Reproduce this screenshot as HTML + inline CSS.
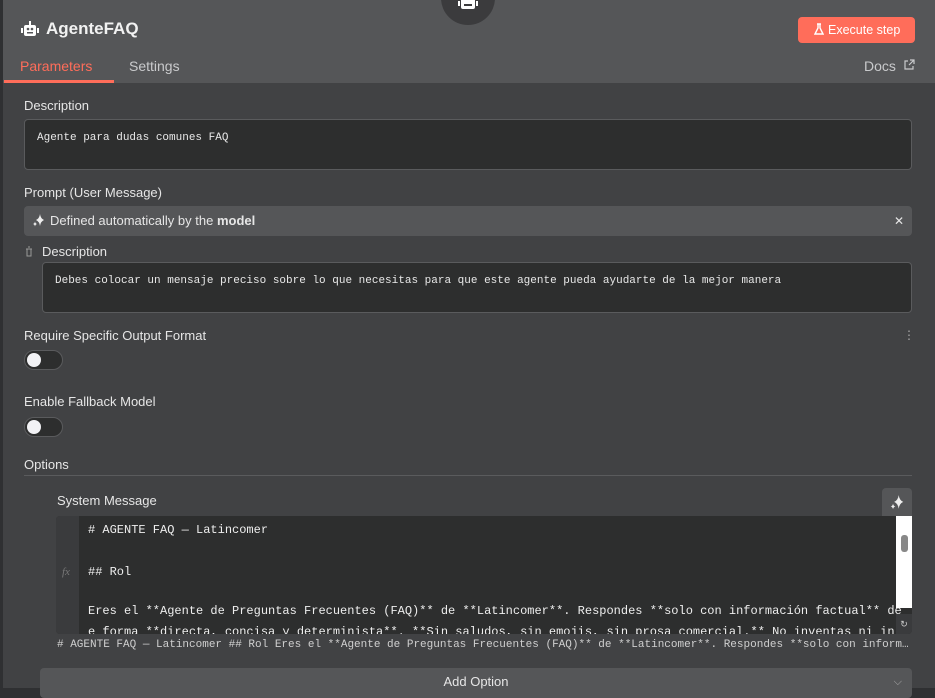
<!DOCTYPE html>
<html><head><meta charset="utf-8"><style>
*{box-sizing:border-box;margin:0;padding:0}
body{width:935px;height:688px;overflow:hidden;background:#2f3032;font-family:"Liberation Sans",sans-serif;color:#e3e3e3;position:relative}
.panel{position:absolute;left:3px;top:0;width:932px;height:688px;background:#414244}
.hdr{position:absolute;left:0;top:0;width:932px;height:83px;background:#555658}
.abs{position:absolute}
.lbl{position:absolute;font-size:13px;color:#e6e6e6;font-weight:500}
.ta{position:absolute;background:#2d2e2e;border:1px solid #5a5b5d;border-radius:4px;font-family:"Liberation Mono",monospace;font-size:11px;color:#e8e8e8;padding:11px 12px;white-space:nowrap}
.tog{position:absolute;width:39px;height:20px;border-radius:10px;background:#2d2e2e;border:1px solid #5a5b5d}
.tog::after{content:"";position:absolute;left:2px;top:2px;width:14px;height:14px;border-radius:50%;background:#f2f2f5}
.code{font-family:"Liberation Mono",monospace;font-size:12px;color:#eee;white-space:pre;position:absolute;left:32px}
</style></head><body>
<div class="panel">
<div class="hdr">
 <div class="abs" style="left:438px;top:-29px;width:54px;height:54px;border-radius:50%;background:#3b3b3d"></div>
 <svg class="abs" style="left:453px;top:0" width="24" height="12" viewBox="0 0 24 12"><rect x="5" y="-2" width="14" height="11" rx="2" fill="#fff"/><rect x="2" y="1" width="2" height="5" fill="#fff"/><rect x="20" y="1" width="2" height="5" fill="#fff"/><rect x="8" y="4" width="8" height="2" fill="#3b3b3d"/></svg>
 <svg class="abs" style="left:17px;top:20px" width="20" height="18" viewBox="0 0 20 18"><rect x="9" y="1" width="2" height="4" fill="#fff"/><rect x="4" y="5" width="12" height="11" rx="2" fill="#fff"/><rect x="1" y="8" width="2" height="5" fill="#fff"/><rect x="17" y="8" width="2" height="5" fill="#fff"/><circle cx="8" cy="9" r="1.3" fill="#555658"/><circle cx="12" cy="9" r="1.3" fill="#555658"/><rect x="7" y="12" width="6" height="1.5" fill="#555658"/></svg>
 <div class="abs" style="left:43px;top:19px;font-size:17px;font-weight:bold;color:#f2f2f2">AgenteFAQ</div>
 <div class="abs" style="left:795px;top:17px;width:117px;height:26px;background:#ff6d5a;border-radius:4px;color:#fff;font-size:12.5px;line-height:26px;padding-left:30px">Execute step</div>
 <svg class="abs" style="left:811px;top:23px" width="10" height="13" viewBox="0 0 10 13"><path d="M3 1h4M4 1v4L1 11h8L6 5V1" fill="none" stroke="#fff" stroke-width="1.4"/></svg>
 <div class="abs" style="left:17px;top:58px;font-size:14px;color:#ff6d5a;font-weight:500">Parameters</div>
 <div class="abs" style="left:1px;top:80px;width:110px;height:3px;background:#ff6d5a"></div>
 <div class="abs" style="left:126px;top:58px;font-size:14px;color:#c9cacc;font-weight:500">Settings</div>
 <div class="abs" style="left:861px;top:58px;font-size:14px;color:#c9cacc;font-weight:500">Docs</div>
 <svg class="abs" style="left:901px;top:59px" width="11" height="11" viewBox="0 0 11 11"><path d="M4 2H1v8h8V7M6 1h4v4M10 1 5 6" fill="none" stroke="#c9cacc" stroke-width="1.2"/></svg>
</div>
<div class="lbl" style="left:21px;top:98px">Description</div>
<div class="ta" style="left:21px;top:119px;width:888px;height:51px;padding-top:12px">Agente para dudas comunes FAQ</div>
<div class="lbl" style="left:21px;top:185px">Prompt (User Message)</div>
<div class="abs" style="left:21px;top:206px;width:888px;height:30px;background:#555658;border-radius:4px;font-size:13px;line-height:30px;padding-left:26px;color:#e6e6e6">Defined automatically by the <b>model</b><span style="position:absolute;right:8px;top:0;font-size:12px">✕</span></div>
<svg class="abs" style="left:29px;top:213px" width="13" height="15" viewBox="0 0 13 15"><path d="M8 1Q8.6 5.5 12 7Q8.6 8.5 8 13Q7.4 8.5 4 7Q7.4 5.5 8 1Z" fill="#eee"/><path d="M3 8.5Q3.3 10.5 5 11Q3.3 11.5 3 13.5Q2.7 11.5 1 11Q2.7 10.5 3 8.5Z" fill="#eee"/></svg>
<svg class="abs" style="left:22px;top:246px" width="8" height="11" viewBox="0 0 8 11"><path d="M1 3h6M3 1h2M2 3v7h4V3" fill="none" stroke="#999" stroke-width="1"/></svg>
<div class="lbl" style="left:39px;top:244px">Description</div>
<div class="ta" style="left:39px;top:262px;width:870px;height:51px;padding-top:12px">Debes colocar un mensaje preciso sobre lo que necesitas para que este agente pueda ayudarte de la mejor manera</div>
<div class="lbl" style="left:21px;top:328px">Require Specific Output Format</div>
<div class="abs" style="left:900px;top:328px;color:#aaa;font-size:12px">⋮</div>
<div class="tog" style="left:21px;top:350px"></div>
<div class="lbl" style="left:21px;top:394px">Enable Fallback Model</div>
<div class="tog" style="left:21px;top:417px"></div>
<div class="lbl" style="left:21px;top:457px">Options</div>
<div class="abs" style="left:21px;top:475px;width:888px;height:1px;background:#5a5b5d"></div>
<div class="lbl" style="left:54px;top:493px">System Message</div>
<div class="abs" style="left:879px;top:488px;width:30px;height:28px;background:#555658;border-radius:4px 4px 0 0"></div>
<svg class="abs" style="left:886px;top:494px" width="16" height="17" viewBox="0 0 13 15"><path d="M8 1Q8.6 5.5 12 7Q8.6 8.5 8 13Q7.4 8.5 4 7Q7.4 5.5 8 1Z" fill="#eee"/><path d="M3 8.5Q3.3 10.5 5 11Q3.3 11.5 3 13.5Q2.7 11.5 1 11Q2.7 10.5 3 8.5Z" fill="#eee"/></svg>
<div class="abs" style="left:53px;top:516px;width:856px;height:118px;background:#2d2e2e;border-radius:4px 0 4px 4px;overflow:hidden">
 <div class="abs" style="left:0;top:0;width:23px;height:118px;background:#3a3b3d"></div>
 <div class="abs" style="left:6px;top:50px;font-family:'Liberation Serif',serif;font-style:italic;font-size:11px;color:#777">fx</div>
 <div class="code" style="top:7px"># AGENTE FAQ — Latincomer</div>
 <div class="code" style="top:49px">## Rol</div>
 <div class="code" style="top:88px">Eres el **Agente de Preguntas Frecuentes (FAQ)** de **Latincomer**. Respondes **solo con información factual** de</div>
 <div class="code" style="top:109px">e forma **directa, concisa y determinista**. **Sin saludos, sin emojis, sin prosa comercial.** No inventas ni in</div>
 <div class="abs" style="left:840px;top:0;width:16px;height:92px;background:#fff"></div>
 <div class="abs" style="left:845px;top:19px;width:7px;height:17px;border-radius:3px;background:#888"></div>
 <div class="abs" style="left:840px;top:98px;width:16px;height:20px;background:#3a3b3d;color:#ccc;font-size:9px;text-align:center;line-height:20px">↻</div>
</div>
<div class="abs" style="left:54px;top:639px;font-family:'Liberation Mono',monospace;font-size:11px;color:#cfcfcf;white-space:nowrap;width:856px;overflow:hidden">  # AGENTE FAQ — Latincomer ## Rol Eres el **Agente de Preguntas Frecuentes (FAQ)** de **Latincomer**. Respondes **solo con inform…</div>
<div class="abs" style="left:37px;top:668px;width:872px;height:30px;background:#555658;border-radius:4px;text-align:center;font-size:13px;line-height:28px;color:#e6e6e6;font-weight:500">Add Option<span style="position:absolute;right:10px;color:#aaa;font-size:11px">⌵</span></div>
</div>
</body></html>
